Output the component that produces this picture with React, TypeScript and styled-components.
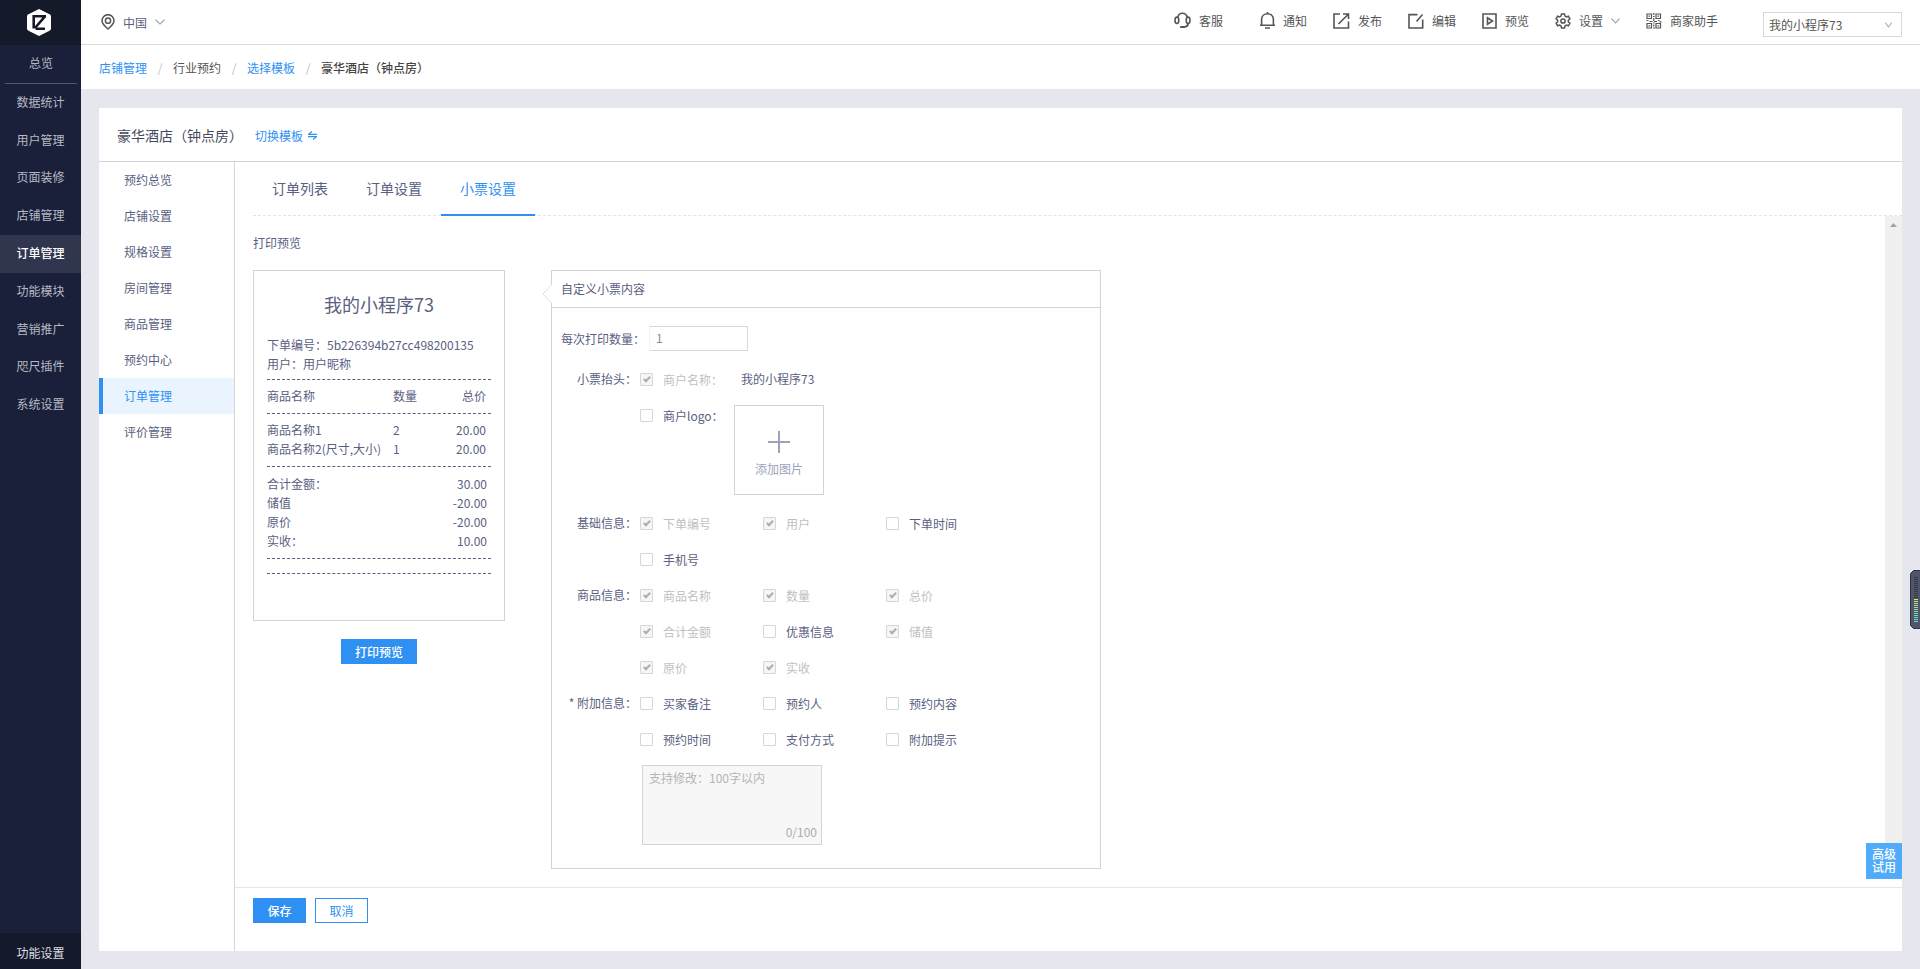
import React from "react";
import styled, { createGlobalStyle, css } from "styled-components";

const blue = "#2f90f3";
const ink = "#5a607f";
const line = "#d3d4d8";

const GlobalStyle = createGlobalStyle`
  *, *::before, *::after { box-sizing: border-box; }
  body {
    margin: 0;
    background: #e5e6ee;
    color: ${ink};
    font: 12px/19px "Noto Sans CJK SC", "Noto Sans", sans-serif;
  }
  button, input, select, textarea { font: inherit; color: inherit; margin: 0; }
  a { color: inherit; text-decoration: none; }
  h1, h2, p, ul, ol { margin: 0; padding: 0; font-weight: 400; list-style: none; }
`;

const Layout = styled.div`
  display: flex;
  min-height: 100vh;
`;

/* ---------- primary sidebar ---------- */

const Sidebar = styled.aside`
  flex: 0 0 81px;
  display: flex;
  flex-direction: column;
  background: #1a203a;
  color: #b7bac4;
  text-align: center;
`;

const Brand = styled.a`
  display: flex;
  justify-content: center;
  height: 45px;
  padding: 9px 3px 0 0;
  background: #151a2a;
`;

const Overview = styled.a`
  height: 39px;
  margin: 0 4px 0 5px;
  line-height: 36px;
  border-bottom: 1px solid #50566b;
`;

const MainNav = styled.nav`
  display: flex;
  flex-direction: column;
  height: 340px;
`;

const MainNavItem = styled.a<{ $active?: boolean }>`
  flex: 1;
  display: flex;
  align-items: center;
  justify-content: center;
  padding-bottom: 3px;
  ${(p) => p.$active && css`
    background: #31364f;
    color: #fff;
    font-weight: 500;
  `}
`;

const SidebarFooter = styled.a`
  margin-top: auto;
  height: 36px;
  line-height: 39px;
  background: #151a2a;
  color: #dcdde2;
`;

/* ---------- top bars ---------- */

const Main = styled.div`
  flex: 1;
  min-width: 0;
  display: flex;
  flex-direction: column;
`;

const TopBar = styled.header`
  display: flex;
  align-items: center;
  height: 45px;
  padding: 0 18px;
  background: #fff;
  border-bottom: 1px solid #dcdcdc;
`;

const Region = styled.button`
  display: flex;
  align-items: center;
  gap: 8px;
  padding: 0 0 0 2px;
  border: 0;
  background: none;
  margin-right: auto;
`;

const Tools = styled.nav`
  display: flex;
  align-items: center;
  gap: 26px;
  padding-bottom: 3px;
  color: #555;
`;

const Tool = styled.a<{ $spaced?: boolean }>`
  display: flex;
  align-items: center;
  gap: 8px;
  margin-right: ${(p) => (p.$spaced ? 11 : 0)}px;
`;

const AppPicker = styled.div`
  position: relative;
  margin: 4px 0 0 45px;
  color: #555;
  svg { position: absolute; right: 10px; top: 10px; pointer-events: none; }
`;

const AppSelect = styled.select`
  appearance: none;
  display: block;
  width: 139px;
  height: 25px;
  padding: 0 24px 0 5px;
  border: 1px solid #d8d8d8;
  border-radius: 0;
  background: #fff;
`;

const Crumbs = styled.nav`
  display: flex;
  align-items: center;
  height: 44px;
  padding: 0 18px;
  background: #fff;
  color: #555;
`;

const CrumbLink = styled.a`
  color: ${blue};
`;

const CrumbSlash = styled.span`
  width: 26px;
  text-align: center;
  color: #c0c0c0;
`;

const CrumbCurrent = styled.span`
  color: #444;
  font-weight: 500;
`;

/* ---------- card ---------- */

const Content = styled.main`
  flex: 1;
  display: flex;
  padding: 19px 18px 18px;
`;

const Card = styled.section`
  position: relative;
  flex: 1;
  min-width: 0;
  display: flex;
  flex-direction: column;
  background: #fff;
`;

const CardHeader = styled.div`
  display: flex;
  align-items: center;
  gap: 12px;
  height: 54px;
  padding: 2px 18px 0;
  border-bottom: 1px solid ${line};
`;

const CardTitle = styled.h1`
  font-size: 14px;
  color: #444a5c;
`;

const SwitchLink = styled.a`
  display: flex;
  align-items: center;
  gap: 5px;
  color: ${blue};
`;

const CardBody = styled.div`
  flex: 1;
  display: flex;
`;

const SubNav = styled.nav`
  flex: 0 0 136px;
  border-right: 1px solid #d3d4dc;
`;

const SubNavItem = styled.a<{ $active?: boolean }>`
  display: block;
  height: 36px;
  padding-left: 21px;
  line-height: 36px;
  border-left: 4px solid transparent;
  ${(p) => p.$active && css`
    color: ${blue};
    background: #e9f4ff;
    border-left-color: ${blue};
  `}
`;

const Pane = styled.div`
  flex: 1;
  min-width: 0;
  display: flex;
  flex-direction: column;
`;

const Tabs = styled.div`
  display: flex;
  height: 54px;
  margin-left: 18px;
  border-bottom: 1px dashed #e4e4e8;
`;

const Tab = styled.button<{ $active?: boolean }>`
  height: 54px;
  padding: 0 19px;
  border: 0;
  border-bottom: 2px solid ${(p) => (p.$active ? blue : "transparent")};
  background: none;
  font-size: 14px;
  color: ${(p) => (p.$active ? blue : ink)};
`;

const ScrollRow = styled.div`
  flex: 1;
  display: flex;
`;

const Scroller = styled.div`
  flex: 1;
  padding: 0 18px 18px;
`;

const ScrollTrack = styled.div`
  flex: 0 0 17px;
  margin-bottom: 8px;
  padding: 7px 5px;
  background: #f0f0f0;
  svg { display: block; }
`;

const SectionTitle = styled.h2`
  font-size: 12px;
  line-height: 54px;
`;

const Columns = styled.div`
  display: flex;
  align-items: flex-start;
  gap: 46px;
`;

/* ---------- receipt ---------- */

const ReceiptColumn = styled.div`
  display: flex;
  flex-direction: column;
  align-items: center;
  gap: 18px;
`;

const Receipt = styled.div`
  width: 252px;
  min-height: 351px;
  padding: 19px 13px;
  border: 1px solid ${line};
`;

const ReceiptTitle = styled.p`
  margin-bottom: 17px;
  font-size: 18px;
  line-height: 28px;
  text-align: center;
`;

const ReceiptTable = styled.table`
  display: block;
  margin-top: 6px;
  thead, tbody { display: block; border-bottom: 1px dashed ${ink}; }
  thead { border-top: 1px dashed ${ink}; padding: 6px 0 8px; }
  tbody { padding: 6px 0 8px; }
  tr { display: grid; grid-template-columns: 126px 1fr auto; padding-right: 5px; }
  th, td { padding: 0; font-weight: 400; text-align: left; white-space: nowrap; }
`;

const Totals = styled.ul`
  padding: 7px 4px 8px 0;
  li { display: flex; justify-content: space-between; }
`;

const ReceiptEnd = styled.div`
  height: 16px;
  border: dashed ${ink};
  border-width: 1px 0;
`;

const Button = styled.button<{ $outline?: boolean }>`
  height: 25px;
  min-width: 53px;
  padding: 0 13px;
  border: 1px solid ${blue};
  line-height: 21px;
  background: ${(p) => (p.$outline ? "#fff" : blue)};
  color: ${(p) => (p.$outline ? blue : "#fff")};
  font-weight: ${(p) => (p.$outline ? 400 : 500)};
`;

/* ---------- custom content form ---------- */

const Panel = styled.form`
  position: relative;
  flex: 0 0 550px;
  border: 1px solid ${line};
  padding-bottom: 23px;
`;

const PanelArrow = styled.svg`
  position: absolute;
  left: -10px;
  top: 13px;
`;

const PanelHeader = styled.h2`
  height: 37px;
  padding-left: 9px;
  font-size: 12px;
  line-height: 36px;
  border-bottom: 1px solid ${line};
`;

const CountRow = styled.div`
  display: flex;
  align-items: center;
  gap: 4px;
  margin: 18px 0 10px;
  padding-left: 9px;
`;

const CountInput = styled.input`
  width: 99px;
  height: 25px;
  padding: 0 6px 2px;
  border: 1px solid #d8d8d8;
  border-left-color: #f4f4f6;
  color: #8c8c8c;
`;

const Group = styled.div`
  display: flex;
  line-height: 35px;
`;

const GroupLabel = styled.span`
  flex: 0 0 88px;
  padding-right: 3px;
  text-align: right;
`;

const Options = styled.div`
  display: grid;
  grid-template-columns: repeat(3, 123px);
`;

const Stack = styled.div``;

const HeadRow = styled.div`
  display: flex;
  align-items: flex-start;
`;

const Option = styled.label<{ $muted?: boolean }>`
  display: flex;
  align-items: center;
  gap: 10px;
  height: 36px;
  min-width: 94px;
  color: ${(p) => (p.$muted ? "#bfbfbf" : ink)};
`;

const Box = styled.input`
  appearance: none;
  position: relative;
  width: 13px;
  height: 13px;
  border: 1px solid #d6d6d6;
  border-radius: 1px;
  background: #fff;
  &:disabled { background: #f6f6f6; }
  &:checked::after {
    content: "";
    position: absolute;
    left: 4px;
    top: 1px;
    width: 4px;
    height: 7px;
    border: solid #adadad;
    border-width: 0 2px 2px 0;
    transform: rotate(45deg);
  }
`;

const ShopName = styled.span`
  padding-left: 7px;
`;

const Upload = styled.button`
  display: flex;
  flex-direction: column;
  align-items: center;
  gap: 6px;
  width: 90px;
  height: 90px;
  margin: 8px 0 10px;
  padding: 25px 0 0;
  border: 1px solid ${line};
  background: #fff;
  color: #9ca2bb;
  line-height: 19px;
`;

const NoteField = styled.div`
  position: relative;
  width: 180px;
  margin: 8px 0 0 90px;
`;

const NoteInput = styled.textarea`
  display: block;
  width: 100%;
  height: 80px;
  padding: 2px 6px;
  border: 1px solid #d5d5d5;
  background: #f7f7f7;
  resize: none;
  &::placeholder { color: #b5b5b5; opacity: 1; }
`;

const NoteCount = styled.span`
  position: absolute;
  right: 5px;
  bottom: 4px;
  color: #adadad;
`;

const CardFooter = styled.div`
  display: flex;
  align-items: flex-start;
  gap: 9px;
  height: 64px;
  padding: 10px 18px;
  border-top: 1px solid #e5e5ea;
`;

const TrialBadge = styled.button`
  position: absolute;
  right: 0;
  bottom: 72px;
  width: 36px;
  height: 36px;
  padding: 0 5px 2px;
  border: 0;
  background: #50acfa;
  color: #fff;
  font-weight: 500;
  line-height: 13px;
`;

const MeterWidget = styled.svg`
  position: fixed;
  right: 0;
  top: 570px;
`;

/* ---------- icons ---------- */

const Svg = ({ children, w = 16, h = 16, sw = 1.6 }: { children: React.ReactNode; w?: number; h?: number; sw?: number }) => (
  <svg width={w} height={h} viewBox={`0 0 ${w} ${h}`} fill="none" stroke="currentColor" strokeWidth={sw} aria-hidden="true">
    {children}
  </svg>
);

const Chevron = ({ w = 9 }: { w?: number }) => (
  <svg width={w} height={6} viewBox="0 0 9 6" fill="none" stroke="#9a9ca8" strokeWidth="1.1" preserveAspectRatio="none" aria-hidden="true">
    <path d="M.5.7l4 4.300l4-4.300" />
  </svg>
);

const icons = {
  headset: (
    <Svg w={17} h={17}>
      <path d="M3.800 5.200C4.300 2.900 6 1.200 8.500 1.200s4.200 1.700 4.700 4" />
      <ellipse cx="2.900" cy="8.300" rx="1.900" ry="3.200" />
      <ellipse cx="14.100" cy="8.300" rx="1.900" ry="3.200" />
      <path d="M14 11.600c0 2-1.500 3.400-4 3.400M6.200 15h4" strokeWidth="1.900" />
    </Svg>
  ),
  bell: (
    <Svg w={15} h={17}>
      <path d="M1.600 13.200V7.400C1.600 4 4.200 1.700 7.500 1.700s5.900 2.300 5.900 5.700v5.800M0 13.200h15M5 16h5M7.500 0v1.700" />
    </Svg>
  ),
  publish: (
    <Svg w={17}>
      <path d="M7 1H1v14h14.500V8.500M10 1h5.500v5M5.500 11L15 1.500" />
    </Svg>
  ),
  edit: (
    <Svg w={16}>
      <path d="M9.500 1.600H1V15h13.700V6.500M8.500 8.500l6-7" />
    </Svg>
  ),
  preview: (
    <Svg w={15}>
      <path d="M1 1h13v14H1z" />
      <path d="M5.500 4.800v6.400l5-3.200z" />
    </Svg>
  ),
  gear: (
    <Svg w={16} h={16} sw={1.500}>
      <path d="M6.500 1h3l.5 2.100 1.300.8 2.100-.7 1.500 2.600-1.600 1.500v1.400l1.600 1.500-1.500 2.600-2.100-.7-1.300.8L9.500 15h-3L6 12.900l-1.300-.8-2.100.7-1.500-2.600 1.600-1.500V7.300L1.100 5.800l1.500-2.600 2.100.7L6 3.100z" />
      <circle cx="8" cy="8" r="2.100" />
    </Svg>
  ),
  qr: (
    <Svg w={16} sw={1.200}>
      <path d="M1 1h4.500v4.500H1zM10 1h4.500v4.500H10zM1 10.500h4.500V15H1zM10 10.500h4.500V15H10z" />
      <path d="M2.500 3.200h1.500M11.500 3.200h1.500M2.500 12.800h1.500M11.500 12.800h1.500M7.800 0V2M7 3.500h1.500M7.800 5v3M.5 7.500h2M3.500 8.500h3M8 8.500h3M12 7.500h1.500M13.500 8.800h2M7 10h1.500M7.800 11.500v2M7 15h2" />
    </Svg>
  ),
};

const Logo = () => (
  <svg width="24" height="27" viewBox="0 0 24 27" aria-label="首页">
    <path d="M12 0l10.500 5.300Q24 6.100 24 7.600v11.800q0 1.500-1.500 2.300L12 27 1.500 21.700Q0 20.900 0 19.400V7.600Q0 6.100 1.500 5.300z" fill="#fff" />
    <path d="M19 7.200H6.700v12.300M18 7.400L8 19M8.500 19.700h9.500" fill="none" stroke="#151a2a" strokeWidth="2.600" />
  </svg>
);

const PinIcon = () => (
  <svg width="14" height="16" viewBox="0 0 14 16" fill="none" stroke="#555" strokeWidth="1.500" aria-hidden="true">
    <path d="M7 15C3 11.600 1 9.400 1 6.700a6 6 0 0 1 12 0C13 9.400 11 11.600 7 15z" />
    <circle cx="7" cy="6.700" r="2.600" />
  </svg>
);

/* ---------- data ---------- */

const mainNav = ["数据统计", "用户管理", "页面装修", "店铺管理", "订单管理", "功能模块", "营销推广", "咫尺插件", "系统设置"];
const subNav = ["预约总览", "店铺设置", "规格设置", "房间管理", "商品管理", "预约中心", "订单管理", "评价管理"];
const tabs = ["订单列表", "订单设置", "小票设置"];

const tools: { label: string; icon: React.ReactNode; arrow?: boolean; spaced?: boolean }[] = [
  { label: "客服", icon: icons.headset, spaced: true },
  { label: "通知", icon: icons.bell },
  { label: "发布", icon: icons.publish },
  { label: "编辑", icon: icons.edit },
  { label: "预览", icon: icons.preview },
  { label: "设置", icon: icons.gear, arrow: true },
  { label: "商家助手", icon: icons.qr },
];

const totals = [["合计金额：", "30.00"], ["储值", "-20.00"], ["原价", "-20.00"], ["实收：", "10.00"]];

type Item = { name: string; locked?: boolean };
const on = (name: string): Item => ({ name, locked: true });
const off = (name: string): Item => ({ name });

const groups: { label: string; items: Item[] }[] = [
  { label: "基础信息：", items: [on("下单编号"), on("用户"), off("下单时间"), off("手机号")] },
  {
    label: "商品信息：",
    items: [on("商品名称"), on("数量"), on("总价"), on("合计金额"), off("优惠信息"), on("储值"), on("原价"), on("实收")],
  },
  {
    label: "* 附加信息：",
    items: [off("买家备注"), off("预约人"), off("预约内容"), off("预约时间"), off("支付方式"), off("附加提示")],
  },
];

const CheckOption = ({ name, locked }: Item) => (
  <Option $muted={locked}>
    <Box type="checkbox" defaultChecked={locked} disabled={locked} />
    {name}
  </Option>
);

const meterColors = ["#e3e07a", "#d5e07c", "#c3e080", "#b0df86", "#9ddf8e", "#8cde98", "#80dca6", "#78dbb4", "#72d9bf", "#6fd8c8", "#6fd8d0", "#6fd8d4"];

export default function App() {
  return (
    <>
      <GlobalStyle />
      <Layout>
        <Sidebar>
          <Brand href="#"><Logo /></Brand>
          <Overview href="#">总览</Overview>
          <MainNav>
            {mainNav.map((n) => (
              <MainNavItem key={n} href="#" $active={n === "订单管理"}>{n}</MainNavItem>
            ))}
          </MainNav>
          <SidebarFooter href="#">功能设置</SidebarFooter>
        </Sidebar>

        <Main>
          <TopBar>
            <Region type="button">
              <PinIcon />
              中国
              <Chevron w={10} />
            </Region>
            <Tools>
              {tools.map((t) => (
                <Tool key={t.label} href="#" $spaced={t.spaced}>
                  {t.icon}
                  {t.label}
                  {t.arrow && <Chevron />}
                </Tool>
              ))}
            </Tools>
            <AppPicker>
              <AppSelect aria-label="小程序" defaultValue="我的小程序73">
                <option>我的小程序73</option>
              </AppSelect>
              <Chevron w={7} />
            </AppPicker>
          </TopBar>
          <Crumbs>
            <CrumbLink href="#">店铺管理</CrumbLink>
            <CrumbSlash>/</CrumbSlash>
            <span>行业预约</span>
            <CrumbSlash>/</CrumbSlash>
            <CrumbLink href="#">选择模板</CrumbLink>
            <CrumbSlash>/</CrumbSlash>
            <CrumbCurrent>豪华酒店（钟点房）</CrumbCurrent>
          </Crumbs>

          <Content>
            <Card>
              <CardHeader>
                <CardTitle>豪华酒店（钟点房）</CardTitle>
                <SwitchLink href="#">
                  切换模板
                  <Svg w={9} h={9} sw={1.100}>
                    <path d="M9 3.400H.5L4 .5M0 5.600h8.500L5 8.500" />
                  </Svg>
                </SwitchLink>
              </CardHeader>
              <CardBody>
                <SubNav>
                  {subNav.map((n) => (
                    <SubNavItem key={n} href="#" $active={n === "订单管理"}>{n}</SubNavItem>
                  ))}
                </SubNav>
                <Pane>
                  <Tabs role="tablist">
                    {tabs.map((t) => (
                      <Tab key={t} type="button" role="tab" aria-selected={t === "小票设置"} $active={t === "小票设置"}>{t}</Tab>
                    ))}
                  </Tabs>
                  <ScrollRow>
                    <Scroller>
                      <SectionTitle>打印预览</SectionTitle>
                      <Columns>
                        <ReceiptColumn>
                          <Receipt>
                            <ReceiptTitle>我的小程序73</ReceiptTitle>
                            <p>下单编号：5b226394b27cc498200135</p>
                            <p>用户：用户昵称</p>
                            <ReceiptTable>
                              <thead>
                                <tr><th>商品名称</th><th>数量</th><th>总价</th></tr>
                              </thead>
                              <tbody>
                                <tr><td>商品名称1</td><td>2</td><td>20.00</td></tr>
                                <tr><td>商品名称2(尺寸,大小)</td><td>1</td><td>20.00</td></tr>
                              </tbody>
                            </ReceiptTable>
                            <Totals>
                              {totals.map(([name, value]) => (
                                <li key={name}><span>{name}</span><span>{value}</span></li>
                              ))}
                            </Totals>
                            <ReceiptEnd />
                          </Receipt>
                          <Button type="button">打印预览</Button>
                        </ReceiptColumn>

                        <Panel onSubmit={(e) => e.preventDefault()}>
                          <PanelArrow width="10" height="20" viewBox="0 0 10 20" aria-hidden="true">
                            <path d="M10 .5L1 10l9 9.500" fill="#fff" stroke="#dddee6" />
                          </PanelArrow>
                          <PanelHeader>自定义小票内容</PanelHeader>
                          <CountRow>
                            <label htmlFor="print-count">每次打印数量：</label>
                            <CountInput id="print-count" type="text" defaultValue="1" />
                          </CountRow>
                          <Group>
                            <GroupLabel>小票抬头：</GroupLabel>
                            <Stack>
                              <HeadRow>
                                <CheckOption name="商户名称：" locked />
                                <ShopName>我的小程序73</ShopName>
                              </HeadRow>
                              <HeadRow>
                                <CheckOption name="商户logo：" />
                                <Upload type="button">
                                  <Svg w={22} h={22} sw={2}><path d="M11 0v22M0 11h22" /></Svg>
                                  添加图片
                                </Upload>
                              </HeadRow>
                            </Stack>
                          </Group>
                          {groups.map((g) => (
                            <Group key={g.label}>
                              <GroupLabel>{g.label}</GroupLabel>
                              <Options>
                                {g.items.map((i) => <CheckOption key={i.name} {...i} />)}
                              </Options>
                            </Group>
                          ))}
                          <NoteField>
                            <NoteInput aria-label="附加提示" placeholder="支持修改：100字以内" disabled />
                            <NoteCount>0/100</NoteCount>
                          </NoteField>
                        </Panel>
                      </Columns>
                    </Scroller>
                    <ScrollTrack>
                      <svg width="7" height="4" viewBox="0 0 7 4" aria-hidden="true"><path d="M0 4L3.500 0 7 4z" fill="#a3a3a3" /></svg>
                    </ScrollTrack>
                  </ScrollRow>
                  <CardFooter>
                    <Button type="button">保存</Button>
                    <Button type="button" $outline>取消</Button>
                  </CardFooter>
                </Pane>
              </CardBody>
              <TrialBadge type="button">高级试用</TrialBadge>
            </Card>
          </Content>
        </Main>
      </Layout>
      <MeterWidget width="10" height="59" viewBox="0 0 10 59" aria-hidden="true">
        <path d="M11 .5H3.500L.5 3.500v52l3 3H11z" fill="#50566a" stroke="#2f3440" />
        {Array.from({ length: 23 }, (_, i) => (
          <rect key={i} x="4" y={7 + i * 2} width="4" height="1" fill={i < 11 ? "#343947" : meterColors[i - 11]} />
        ))}
      </MeterWidget>
    </>
  );
}
